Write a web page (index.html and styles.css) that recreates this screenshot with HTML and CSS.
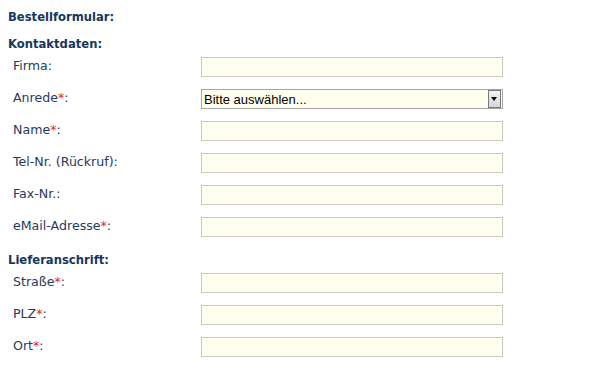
FILE: index.html
```html
<!DOCTYPE html>
<html lang="de">
  <head>
    <meta charset="UTF-8" />
    <title>Bestellformular</title>
    <link rel="stylesheet" href="styles.css">
  </head>
  <body>
    <form class="order-form">
      <h1>Bestellformular:</h1>

      <h2>Kontaktdaten:</h2>
      <div class="row">
        <label for="firma">Firma:</label>
        <input id="firma" type="text" />
      </div>
      <div class="row">
        <label for="anrede">Anrede<span class="req">*</span>:</label>
        <div class="select-wrap">
          <select id="anrede">
            <option>Bitte auswählen...</option>
            <option>Herr</option>
            <option>Frau</option>
          </select>
          <span class="select-btn"></span>
        </div>
      </div>
      <div class="row">
        <label for="name">Name<span class="req">*</span>:</label>
        <input id="name" type="text" />
      </div>
      <div class="row">
        <label for="tel">Tel-Nr. (Rückruf):</label>
        <input id="tel" type="text" />
      </div>
      <div class="row">
        <label for="fax">Fax-Nr.:</label>
        <input id="fax" type="text" />
      </div>
      <div class="row">
        <label for="email">eMail-Adresse<span class="req">*</span>:</label>
        <input id="email" type="text" />
      </div>

      <h2 class="spaced">Lieferanschrift:</h2>
      <div class="row">
        <label for="strasse">Straße<span class="req">*</span>:</label>
        <input id="strasse" type="text" />
      </div>
      <div class="row">
        <label for="plz">PLZ<span class="req">*</span>:</label>
        <input id="plz" type="text" />
      </div>
      <div class="row">
        <label for="ort">Ort<span class="req">*</span>:</label>
        <input id="ort" type="text" />
      </div>
    </form>
  </body>
</html>
```

FILE: styles.css
```css
body {
  margin: 0;
  padding: 0;
  background-color: #fff;
  font-family: "DejaVu Sans", Verdana, sans-serif;
  color: #1f3b5e;
}

.order-form {
  padding: 8px;
}

h1,
h2 {
  margin: 0;
  font-size: 11.6px;
  font-weight: bold;
  line-height: 18px;
  color: #17365d;
}

h2 {
  margin-top: 9px;
}

h2.spaced {
  margin-top: 6px;
}

.row {
  display: flex;
  align-items: flex-start;
  height: 32px;
  padding-left: 5px;
}

.row label {
  width: 188px;
  font-size: 12.6px;
  line-height: 20px;
  margin-top: 3px;
}

.req {
  color: #e3262b;
}

input[type="text"],
select {
  width: 302px;
  height: 20px;
  box-sizing: border-box;
  margin: 0;
  border: 1px solid #c9c9c2;
  background-color: #fffff0;
  font-family: "Liberation Sans", Arial, sans-serif;
  font-size: 13px;
}

input[type="text"] {
  margin-top: 4px;
}

.select-wrap {
  position: relative;
  margin-top: 4px;
}

select {
  display: block;
  appearance: none;
  -webkit-appearance: none;
  border-color: #a5a5a5;
  border-radius: 0;
  padding: 0 0 0 2px;
  color: #000;
  outline: none;
}

/* fake dropdown button drawn over the select */
.select-btn {
  position: absolute;
  top: 1px;
  right: 2px;
  width: 13px;
  height: 18px;
  box-sizing: border-box;
  background: linear-gradient(#f2f2f2, #d6d6d6);
  border: 1px solid #7a7a7a;
}

.select-btn::after {
  content: "";
  position: absolute;
  left: 2px;
  top: 6px;
  border-left: 3.5px solid transparent;
  border-right: 3.5px solid transparent;
  border-top: 4px solid #000;
}
```
